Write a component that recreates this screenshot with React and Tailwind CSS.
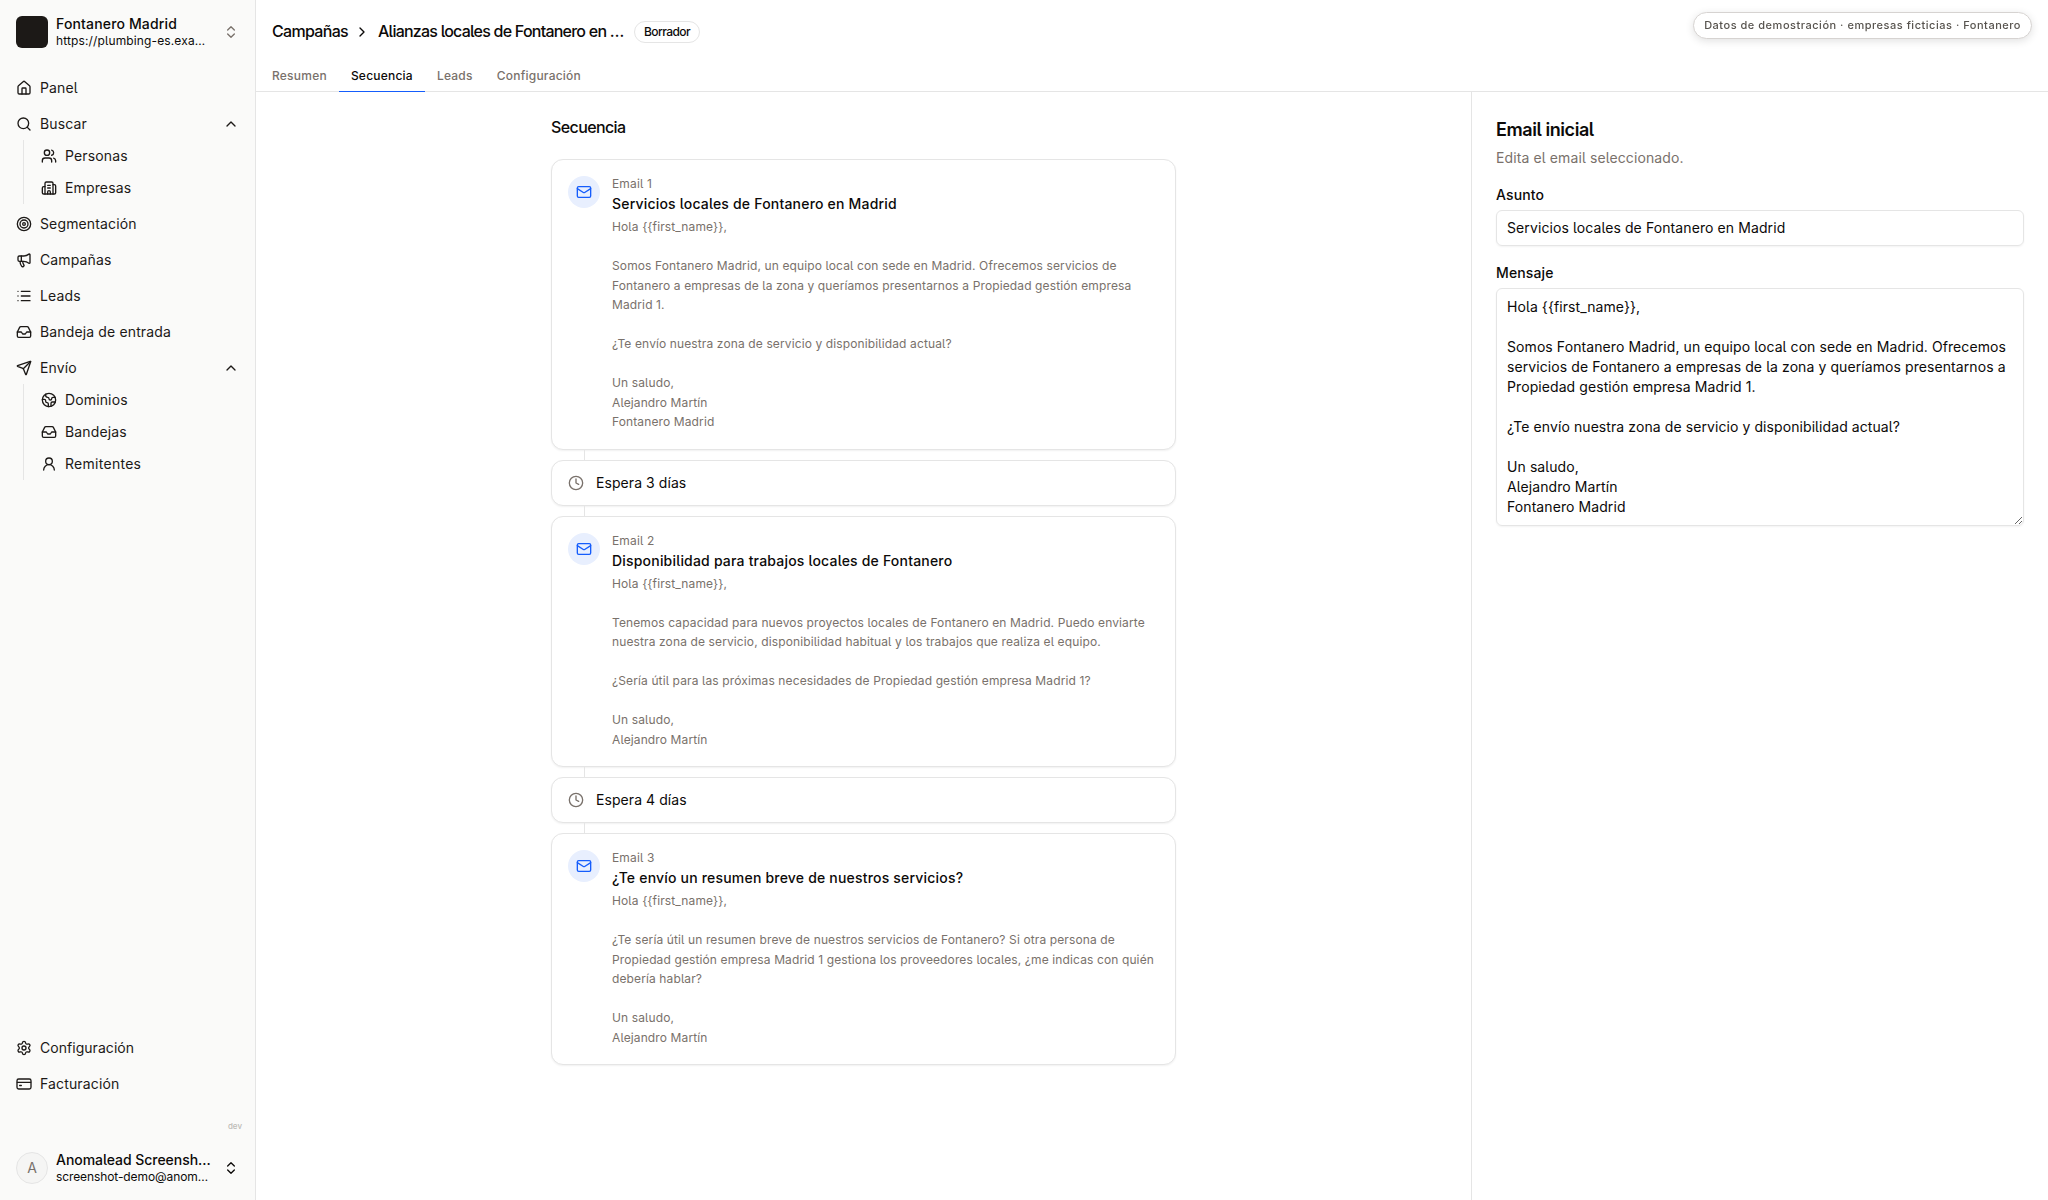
import React from "react";
import {
  House, Search, Users, Building2, Target, Megaphone, List, Inbox, Send, Earth,
  UserRound, Settings, ChevronUp, ChevronRight, ChevronsUpDown, Mail, Clock,
} from "lucide-react";

function CardIcon({ className }) {
  return (
    <svg className={className} viewBox="0 0 24 24" fill="none" stroke="currentColor" strokeWidth="2" strokeLinecap="round" strokeLinejoin="round">
      <rect x="1.5" y="4.5" width="21" height="15" rx="2.5" />
      <path d="M2 9.5h20M5.5 14.2h2.5" />
    </svg>
  );
}

function NavItem({ icon: Icon, label, open, track = "tracking-[0.01em]" }) {
  return (
    <div className="flex h-8 items-center gap-2 px-2 text-sm text-[#1c1917]">
      <Icon className="size-4 shrink-0" />
      <span className={`flex-1 whitespace-nowrap ${track}`}>{label}</span>
      {open && <ChevronUp className="size-4" />}
    </div>
  );
}

function SubNav({ children }) {
  return <div className="ml-[15px] border-l border-[#e5e5e5] pl-[9px]">{children}</div>;
}

const emails = [
  {
    n: "Email 1",
    title: "Servicios locales de Fontanero en Madrid",
    body: "Hola {{first_name}},\n\nSomos Fontanero Madrid, un equipo local con sede en Madrid. Ofrecemos servicios de\nFontanero a empresas de la zona y queríamos presentarnos a Propiedad gestión empresa\nMadrid 1.\n\n¿Te envío nuestra zona de servicio y disponibilidad actual?\n\nUn saludo,\nAlejandro Martín\nFontanero Madrid",
    wait: "Espera 3 días",
  },
  {
    n: "Email 2",
    title: "Disponibilidad para trabajos locales de Fontanero",
    body: "Hola {{first_name}},\n\nTenemos capacidad para nuevos proyectos locales de Fontanero en Madrid. Puedo enviarte\nnuestra zona de servicio, disponibilidad habitual y los trabajos que realiza el equipo.\n\n¿Sería útil para las próximas necesidades de Propiedad gestión empresa Madrid 1?\n\nUn saludo,\nAlejandro Martín",
    wait: "Espera 4 días",
  },
  {
    n: "Email 3",
    title: "¿Te envío un resumen breve de nuestros servicios?",
    body: "Hola {{first_name}},\n\n¿Te sería útil un resumen breve de nuestros servicios de Fontanero? Si otra persona de\nPropiedad gestión empresa Madrid 1 gestiona los proveedores locales, ¿me indicas con quién\ndebería hablar?\n\nUn saludo,\nAlejandro Martín",
  },
];

const message =
  "Hola {{first_name}},\n\nSomos Fontanero Madrid, un equipo local con sede en Madrid. Ofrecemos\nservicios de Fontanero a empresas de la zona y queríamos presentarnos a\nPropiedad gestión empresa Madrid 1.\n\n¿Te envío nuestra zona de servicio y disponibilidad actual?\n\nUn saludo,\nAlejandro Martín\nFontanero Madrid";

function Connector() {
  return <div className="ml-[33px] h-2.5 w-px bg-[#e5e5e5]" />;
}

function EmailCard({ email }) {
  return (
    <div className="flex gap-3 rounded-xl border border-[#e5e5e5] bg-white p-4 shadow-[0_1px_2px_rgba(0,0,0,0.06)]">
      <div className="flex size-8 shrink-0 items-center justify-center rounded-full bg-[#e8effe]">
        <Mail className="size-4 text-[#155dfc]" />
      </div>
      <div>
        <div className="text-xs tracking-[0.012em] text-[#79716b]">{email.n}</div>
        <div className="mt-0.5 text-sm font-medium tracking-[0.014em]">{email.title}</div>
        <div className="mt-[3px] mb-px text-xs leading-[19.5px] tracking-[0.01em] whitespace-pre text-[#79716b]">
          {email.body}
        </div>
      </div>
    </div>
  );
}

function WaitCard({ label }) {
  return (
    <div className="flex items-center gap-3 rounded-xl border border-[#e5e5e5] bg-white px-4 py-3 shadow-[0_1px_2px_rgba(0,0,0,0.06)]">
      <Clock className="size-4 text-[#79716b]" />
      <span className="text-sm tracking-[0.005em]">{label}</span>
    </div>
  );
}

export default function App() {
  return (
    <div className="flex h-[1200px] w-[2048px] overflow-hidden bg-white font-['Inter',sans-serif] text-[#0c0a09] antialiased [font-feature-settings:'cv05'_1]">
      <aside className="flex w-64 shrink-0 flex-col border-r border-[#e5e5e5] bg-[#fafaf9] px-2">
        <div className="mt-2 flex h-12 items-center gap-2 px-2">
          <div className="size-8 shrink-0 rounded-md bg-[#1c1917]" />
          <div className="flex-1 whitespace-nowrap">
            <div className="text-sm leading-[17.5px] font-medium tracking-[0.011em]">Fontanero Madrid</div>
            <div className="text-xs leading-[17px] tracking-[0.011em]">https://plumbing-es.exa…</div>
          </div>
          <ChevronsUpDown className="size-4 text-[#79716b]" />
        </div>
        <nav className="mt-4 flex flex-col gap-1">
          <NavItem icon={House} label="Panel" />
          <div>
            <NavItem icon={Search} label="Buscar" open />
            <SubNav>
              <NavItem icon={Users} label="Personas" />
              <NavItem icon={Building2} label="Empresas" />
            </SubNav>
          </div>
          <NavItem icon={Target} label="Segmentación" />
          <NavItem icon={Megaphone} label="Campañas" />
          <NavItem icon={List} label="Leads" />
          <NavItem icon={Inbox} label="Bandeja de entrada" />
          <div>
            <NavItem icon={Send} label="Envío" open />
            <SubNav>
              <NavItem icon={Earth} label="Dominios" />
              <NavItem icon={Inbox} label="Bandejas" />
              <NavItem icon={UserRound} label="Remitentes" track="tracking-[0.02em]" />
            </SubNav>
          </div>
        </nav>
        <nav className="mt-auto flex flex-col gap-1">
          <NavItem icon={Settings} label="Configuración" track="tracking-[0.003em]" />
          <NavItem icon={CardIcon} label="Facturación" />
        </nav>
        <div className="mt-[19px] h-[15px] pr-[5px] text-right text-[8px] leading-[15px] font-medium text-[#bdbab7]">dev</div>
        <div className="mt-2.5 mb-2 flex h-12 items-center gap-2 px-2">
          <div className="flex size-8 shrink-0 items-center justify-center rounded-full border border-[#e5e5e5] bg-[#f5f5f4] text-sm text-[#79716b]">A</div>
          <div className="flex-1 whitespace-nowrap">
            <div className="text-sm leading-[17.5px] font-medium tracking-[-0.003em]">Anomalead Screensh…</div>
            <div className="text-xs leading-[17px] tracking-[-0.008em]">screenshot-demo@anom…</div>
          </div>
          <ChevronsUpDown className="size-4" />
        </div>
      </aside>

      <div className="flex min-w-0 flex-1 flex-col">
        <header className="flex h-[92px] shrink-0 flex-col border-b border-[#e5e5e5] px-4">
          <div className="mt-4 flex h-8 items-center text-base font-medium tracking-[-0.043em]">
            <span className="pb-0.5">Campañas</span>
            <ChevronRight className="mx-1.5 size-4 shrink-0" />
            <span className="ml-0.5 w-[245px] pb-0.5 tracking-[-0.048em] whitespace-nowrap">Alianzas locales de Fontanero en …</span>
            <div className="ml-[11px] flex h-[22px] items-center rounded-full border border-[#e5e5e5] px-[9px] text-xs tracking-[-0.048em]">
              Borrador
            </div>
          </div>
          <div className="mt-3 -mb-px flex h-8 text-xs font-medium tracking-[0.019em] text-[#79716b]">
            <div className="flex items-center pr-3">Resumen</div>
            <div className="flex items-center border-b border-[#155dfc] px-3 pt-px text-[#0c0a09]">Secuencia</div>
            <div className="flex items-center px-3">Leads</div>
            <div className="flex items-center px-3">Configuración</div>
          </div>
        </header>

        <div className="flex min-h-0 flex-1">
          <main className="flex-1 pt-[23px]">
            <div className="mx-auto w-[625px]">
              <h2 className="mb-5 text-base font-medium tracking-[-0.038em]">Secuencia</h2>
              {emails.map((e) => (
                <div key={e.n}>
                  <EmailCard email={e} />
                  {e.wait && (
                    <>
                      <Connector />
                      <WaitCard label={e.wait} />
                      <Connector />
                    </>
                  )}
                </div>
              ))}
            </div>
          </main>

          <section className="w-[577px] shrink-0 border-l border-[#e5e5e5] p-6">
            <h2 className="text-lg leading-7 font-semibold tracking-[-0.024em]">Email inicial</h2>
            <p className="mt-1 text-sm tracking-[0.008em] text-[#79716b]">Edita el email seleccionado.</p>
            <label className="mt-[17px] block text-sm font-medium tracking-[0.008em]">Asunto</label>
            <input
              className="mt-[5px] block h-9 w-full rounded-md border border-[#e5e5e5] px-2.5 pb-0.5 text-sm tracking-[0.007em] shadow-[0_1px_2px_rgba(0,0,0,0.05)]"
              defaultValue="Servicios locales de Fontanero en Madrid"
            />
            <label className="mt-[17px] block text-sm font-medium tracking-[0.01em]">Mensaje</label>
            <textarea
              className="mt-[5px] block h-[238px] w-full resize-y overflow-hidden rounded-md border border-[#e5e5e5] px-2.5 py-2 text-sm leading-5 tracking-[0.006em] whitespace-pre shadow-[0_1px_2px_rgba(0,0,0,0.05)]"
              defaultValue={message}
            />
          </section>
        </div>
      </div>

      <div className="fixed top-3 right-4 flex h-[27px] items-center rounded-full border border-[#d6d3d1] bg-white px-2.5 text-[11px] font-medium tracking-[0.047em] text-[#57534e] shadow-[0_2px_8px_rgba(0,0,0,0.12)]">
        Datos de demostración · empresas ficticias · Fontanero
      </div>
    </div>
  );
}
